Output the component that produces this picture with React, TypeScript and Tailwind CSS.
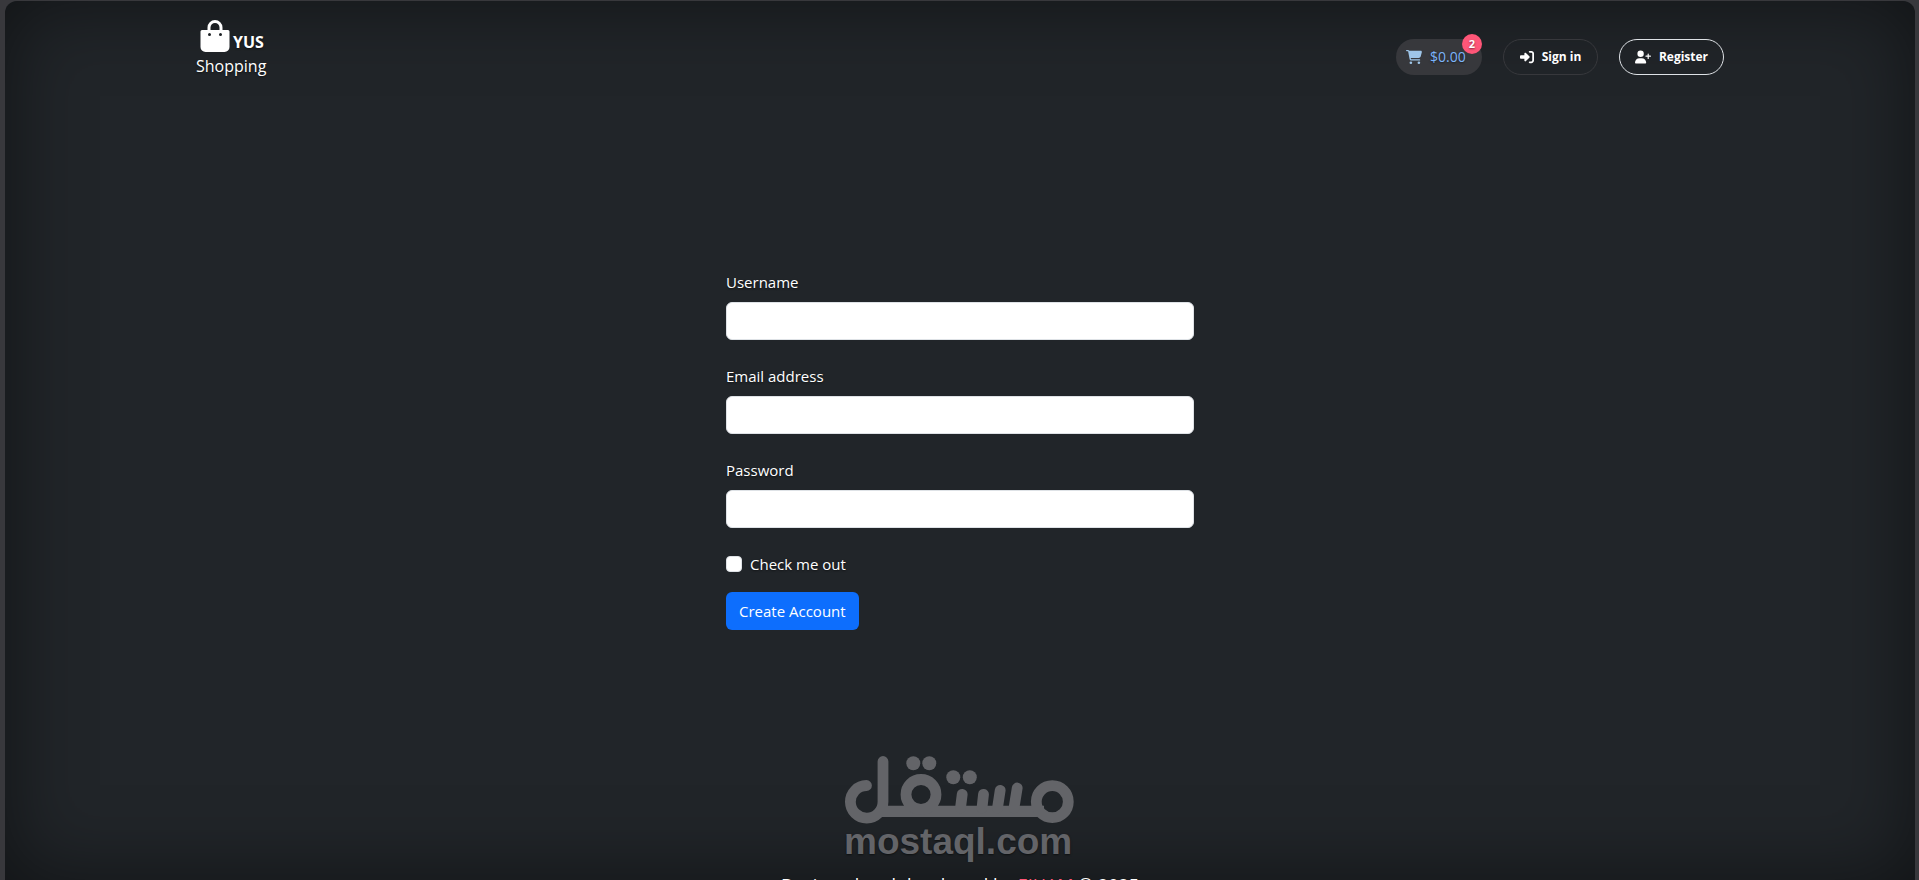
import type { InputHTMLAttributes } from "react";
import { FaCartShopping, FaRightToBracket, FaUserPlus } from "react-icons/fa6";

interface FieldProps extends InputHTMLAttributes<HTMLInputElement> {
  id: string;
  label: string;
}

function Field({ id, label, ...rest }: FieldProps) {
  return (
    <div className="mb-6">
      <label htmlFor={id} className="mb-2 block">{label}</label>
      <input
        id={id}
        className="block h-[38px] w-full rounded-md border border-[#dee2e6] bg-white px-3 text-[#212529]"
        {...rest}
      />
    </div>
  );
}

function BagIcon() {
  return (
    <svg className="h-8 w-[30px]" viewBox="0 0 30 32" fill="none" aria-hidden="true">
      <path d="M9 12V7.5a6 6 0 0 1 12 0V12" stroke="white" strokeWidth="3" />
      <path
        fill="white"
        fillRule="evenodd"
        d="M2 10h26a1.5 1.5 0 0 1 1.5 1.5V27a5 5 0 0 1-5 5h-19a5 5 0 0 1-5-5V11.5A1.5 1.5 0 0 1 2 10zM9.5 13a1.5 1.5 0 1 0 0 3 1.5 1.5 0 0 0 0-3zM20.5 13a1.5 1.5 0 1 0 0 3 1.5 1.5 0 0 0 0-3z"
      />
    </svg>
  );
}

// Header: brand on the left, cart and account actions on the right.
function Header() {
  return (
    <header className="mx-auto flex w-full max-w-[1528px] items-start justify-between pt-[19px]">
      <a href="#" className="flex flex-col gap-0.5 text-base">
        <span className="flex items-end gap-[3px] pl-1">
          <BagIcon />
          <strong className="leading-5">YUS</strong>
        </span>
        <span>Shopping</span>
      </a>
      <nav className="mt-[19px] flex gap-[21px]">
        <a href="#" className="relative flex h-9 w-[86px] items-center gap-2 rounded-full bg-[#37383c] pl-2.5 text-[#9ec5e8]">
          <FaCartShopping className="size-4" />
          <span className="text-sm text-[#7db5fa]">$0.00</span>
          <span className="absolute -top-[5px] right-0 flex size-5 items-center justify-center rounded-full bg-[#ff5678] text-[11px] font-bold text-white">
            2
          </span>
        </a>
        <button type="button" className="flex h-9 w-[95px] items-center justify-center gap-2 rounded-full border border-[#37383c] text-xs font-bold">
          <FaRightToBracket className="size-3.5" />
          Sign in
        </button>
        <button type="button" className="flex h-9 w-[105px] items-center justify-center gap-2 rounded-full border border-[#dee2e6] text-xs font-bold">
          <FaUserPlus className="size-4" />
          Register
        </button>
      </nav>
    </header>
  );
}

function Watermark() {
  return (
    <svg className="mx-auto h-[108px] w-[232px]" viewBox="0 0 232 108" fill="none" aria-hidden="true">
      <g stroke="#636468" strokeWidth="10.8" strokeLinecap="round">
        <path d="M22.5 31.5A16.3 16.3 0 1 0 39 47.7V7.5" />
        <path d="M36 57.3H200" strokeWidth="11.3" strokeLinecap="butt" />
        <circle cx="77" cy="40.5" r="15" />
        <circle cx="208.3" cy="47.7" r="16" />
        <path d="M116.5 54L118.2 40.3M138 54L139.5 40.3M153.5 54L156.2 36.3M170 54L173.2 34" />
      </g>
      <g fill="#636468">
        <circle cx="69.3" cy="9.3" r="7" />
        <circle cx="85.3" cy="9.3" r="7" />
        <circle cx="109.3" cy="23.3" r="7" />
        <circle cx="125.8" cy="23.3" r="7" />
        <text x="0" y="100" fontSize="37" fontWeight="700" fontFamily="Liberation Sans, Arial, sans-serif">mostaql.com</text>
      </g>
    </svg>
  );
}

export default function App() {
  return (
    <div className="h-screen overflow-hidden bg-[#38383c] pt-px pr-1 pl-[5px] font-['Open_Sans',sans-serif] text-[15px] leading-6 text-white [text-shadow:0_1px_2px_rgba(0,0,0,0.5)]">
      <div className="flex h-full flex-col rounded-t-xl bg-[#212529] shadow-[inset_0_0_80px_rgba(0,0,0,0.5)]">
        <Header />
        <main className="mx-auto mt-48 w-full max-w-[468px]">
          <form>
            <Field id="username" label="Username" type="text" />
            <Field id="email" label="Email address" type="email" />
            <Field id="password" label="Password" type="password" />
            <div className="mb-4 flex items-center gap-2">
              <input id="check" type="checkbox" className="size-4 appearance-none rounded border border-[#dee2e6] bg-white" />
              <label htmlFor="check">Check me out</label>
            </div>
            <button type="submit" className="block h-[38px] rounded-md bg-[#0d6efd] px-[13px]">
              Create Account
            </button>
          </form>
        </main>
        <div className="mt-[124px]">
          <Watermark />
        </div>
        <footer className="mt-[11px] text-center text-lg leading-6">
          Designed and developed by <a href="#" className="text-[#ff5678]">EIHAM</a> © 2025
        </footer>
      </div>
    </div>
  );
}
